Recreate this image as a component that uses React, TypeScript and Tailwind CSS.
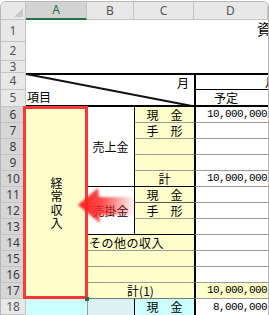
import React from 'react';

const jp = "font-['Noto_Sans_CJK_JP',sans-serif]";
const mono = "font-['Liberation_Mono',monospace]";
const yellow = 'bg-[#ffffcc]';

function RowHead({ n, row, selected }: { n: number; row: string; selected?: boolean }) {
  return (
    <div
      className={`col-[1/2] ${row} flex items-center justify-center border-r border-b border-[#c4c4c4] text-[12px] leading-none font-['Noto_Sans',sans-serif] ${
        selected ? 'bg-[#d6d6d6] text-[#3d3d3d]' : 'bg-[#e8e8e8] text-[#555]'
      }`}
    >
      {n}
    </div>
  );
}

function Amount({ value, row, bg }: { value?: string; row: string; bg?: string }) {
  return (
    <div
      className={`col-[5/6] ${row} flex items-center justify-end pr-[1px] border-l-2 border-l-black border-b border-b-[#9a9a9a] text-[11px] tracking-[-0.6px] ${mono} ${bg ?? 'bg-white'}`}
    >
      {value}
    </div>
  );
}

export default function App() {
  const rows = [
    'row-[2/3]', 'row-[3/4]', 'row-[4/5]', 'row-[5/6]', 'row-[6/7]', 'row-[7/8]',
    'row-[8/9]', 'row-[9/10]', 'row-[10/11]', 'row-[11/12]', 'row-[12/13]', 'row-[13/14]',
    'row-[14/15]', 'row-[15/16]', 'row-[16/17]', 'row-[17/18]', 'row-[18/19]', 'row-[19/20]',
  ];

  return (
    <div className="relative w-[269px] h-[315px] overflow-hidden bg-white">
      <div className="mt-[1px] rounded-t-[6px] border-x border-t border-[#b8b8b8] overflow-hidden">
        <div className="grid grid-cols-[25px_61px_47px_60px_74px] grid-rows-[18px_22px_19px_12px_17px_17px_repeat(12,16px)_16px] text-black">
          {/* column headers */}
          <div className="col-[1/2] row-[1/2] relative bg-[#e8e8e8] border-r border-b border-[#c4c4c4]">
            <div className="absolute right-[2px] bottom-[2px] w-0 h-0 border-l-[9px] border-l-transparent border-b-[9px] border-b-[#c9c9c9]" />
          </div>
          <div className="col-[2/3] row-[1/2] flex items-center justify-center bg-[#d3d3d3] border-r border-[#c4c4c4] border-b-2 border-b-[#217346] text-[12px] text-[#2a6a45] font-['Noto_Sans',sans-serif]">
            A
          </div>
          {['B', 'C', 'D'].map((c, i) => (
            <div
              key={c}
              className={`${['col-[3/4]', 'col-[4/5]', 'col-[5/6]'][i]} row-[1/2] flex items-center justify-center bg-[#e8e8e8] border-r border-b border-[#c4c4c4] text-[12px] text-[#555] font-['Noto_Sans',sans-serif]`}
            >
              {c}
            </div>
          ))}

          {/* row headers */}
          {rows.map((r, i) => (
            <RowHead key={r} n={i + 1} row={r} selected={i >= 5 && i <= 16} />
          ))}

          {/* title rows */}
          <div className="col-[2/6] row-[2/5] bg-white" />
          <div className={`col-[5/6] row-[2/3] flex items-center pl-[63px] pb-[4px] whitespace-nowrap overflow-hidden text-[15px] ${jp}`}>
            資金繰り表
          </div>

          {/* header block with diagonal */}
          <div className={`col-[2/5] row-[5/7] relative border-t-2 border-b-2 border-black text-[12px] ${jp}`}>
            <svg className="absolute left-0 top-[-2px]" width="168" height="34" viewBox="0 0 168 34">
              <line x1="0" y1="1" x2="166" y2="33" stroke="#111" strokeWidth="2" />
            </svg>
            <span className="absolute right-[5px] top-[1px] leading-[14px]">月</span>
            <span className="absolute left-[1px] bottom-[1px] leading-[14px]">項目</span>
          </div>
          <div className={`col-[5/6] row-[5/6] flex items-center pl-[69px] overflow-hidden whitespace-nowrap border-t-2 border-l-2 border-b border-black text-[12px] ${jp}`}>
            月
          </div>
          <div className={`col-[5/6] row-[6/7] flex items-center justify-center pr-[12px] border-l-2 border-b-2 border-black text-[12px] ${jp}`}>
            予定
          </div>

          {/* 経常収入 */}
          <div className={`col-[2/3] row-[7/19] ${yellow} flex flex-col items-center justify-center gap-[1.5px] text-[12px] leading-[12px] ${jp}`}>
            <span>経</span>
            <span>常</span>
            <span>収</span>
            <span>入</span>
          </div>

          {/* 売上金 */}
          <div className={`col-[3/4] row-[7/12] flex items-center justify-center bg-white border-b border-black text-[12px] ${jp}`}>
            売上金
          </div>
          <div className={`col-[4/5] row-[7/8] ${yellow} flex items-center justify-center border-l border-black border-b border-b-[#9a9a9a] text-[12px] ${jp}`}>現　金</div>
          <div className={`col-[4/5] row-[8/9] ${yellow} flex items-center justify-center border-l border-black border-b border-b-[#9a9a9a] text-[12px] ${jp}`}>手　形</div>
          <div className={`col-[4/5] row-[9/10] ${yellow} border-l border-black border-b border-b-[#9a9a9a]`} />
          <div className={`col-[4/5] row-[10/11] ${yellow} border-l border-black border-b border-b-[#9a9a9a]`} />
          <div className={`col-[4/5] row-[11/12] ${yellow} flex items-center justify-center border-l border-black border-b border-black text-[12px] ${jp}`}>計</div>

          {/* 売掛金 */}
          <div className={`col-[3/4] row-[12/15] flex items-center justify-center bg-white border-b border-black text-[12px] ${jp}`}>
            売掛金
          </div>
          <div className={`col-[4/5] row-[12/13] ${yellow} flex items-center justify-center border-l border-black border-b border-b-[#555] text-[12px] ${jp}`}>現　金</div>
          <div className={`col-[4/5] row-[13/14] ${yellow} flex items-center justify-center border-l border-black border-b border-b-[#9a9a9a] text-[12px] ${jp}`}>手　形</div>
          <div className={`col-[4/5] row-[14/15] ${yellow} border-l border-black border-b border-black`} />

          {/* その他 */}
          <div className={`col-[3/5] row-[15/16] ${yellow} flex items-center pl-[2px] border-b border-[#9a9a9a] text-[12px] tracking-[0.5px] ${jp}`}>
            その他の収入
          </div>
          <div className={`col-[3/5] row-[16/17] ${yellow} border-b border-[#9a9a9a]`} />
          <div className={`col-[3/5] row-[17/18] ${yellow} border-b border-[#9a9a9a]`} />
          <div className={`col-[3/5] row-[18/19] ${yellow} flex items-center justify-center border-b border-[#777] text-[12px] ${jp}`}>
            計(1)
          </div>

          {/* amounts */}
          <Amount row="row-[7/8]" value="10,000,000" />
          <Amount row="row-[8/9]" />
          <Amount row="row-[9/10]" />
          <Amount row="row-[10/11]" />
          <Amount row="row-[11/12]" value="10,000,000" />
          <Amount row="row-[12/13]" />
          <Amount row="row-[13/14]" />
          <Amount row="row-[14/15]" />
          <Amount row="row-[15/16]" />
          <Amount row="row-[16/17]" />
          <Amount row="row-[17/18]" />
          <Amount row="row-[18/19]" value="10,000,000" bg={yellow} />

          {/* row 18 */}
          <div className="col-[2/3] row-[19/20] bg-[#ccffff]" />
          <div className="col-[3/4] row-[19/20] bg-[#dcf2f6] border-l border-[#9a9a9a]" />
          <div className={`col-[4/5] row-[19/20] bg-[#ccffff] flex items-center justify-center border-l border-black text-[12px] ${jp}`}>現　金</div>
          <div className={`col-[5/6] row-[19/20] bg-white flex items-center justify-end pr-[1px] border-l-2 border-black text-[11px] tracking-[-0.6px] ${mono}`}>
            8,000,000
          </div>
        </div>
      </div>

      {/* selection outline */}
      <div className="absolute left-[23px] top-[106px] w-[65px] h-[193px] border-[3px] border-[#ff3636]" />
      <div className="absolute left-[85px] top-[297px] w-[4px] h-[4px] bg-[#217346]" />

      {/* arrow */}
      <svg className="absolute left-[76px] top-[186px]" width="62" height="40" viewBox="0 0 62 40">
        <defs>
          <linearGradient id="arrowFade" x1="0" y1="0" x2="1" y2="0">
            <stop offset="0" stopColor="#ff1f1f" stopOpacity="1" />
            <stop offset="0.4" stopColor="#ff2a2a" stopOpacity="0.85" />
            <stop offset="1" stopColor="#ff3030" stopOpacity="0" />
          </linearGradient>
          <filter id="soft" x="-10%" y="-10%" width="120%" height="120%">
            <feGaussianBlur stdDeviation="0.8" />
          </filter>
        </defs>
        <polygon
          points="2,19 22,2 23,11 60,11 60,29 23,29 24,37"
          fill="url(#arrowFade)"
          filter="url(#soft)"
        />
      </svg>
    </div>
  );
}
